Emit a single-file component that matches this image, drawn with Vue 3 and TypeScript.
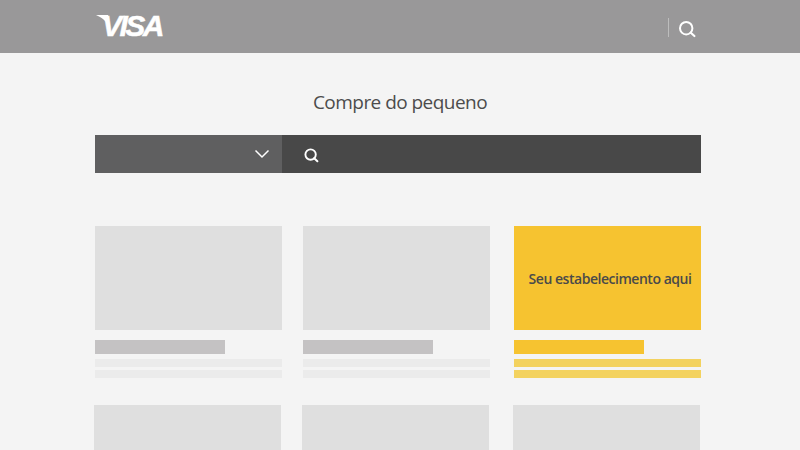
<script setup lang="ts">
interface Card { featured?: boolean; label?: string }
const firstRow: Card[] = [{}, {}, { featured: true, label: 'Seu estabelecimento aqui' }]
const secondRow: Card[] = [{}, {}, {}]
</script>

<template>
  <div class="page">
    <header class="topbar">
      <div class="logo">
        <svg class="flick" width="16" height="14" viewBox="0 0 16 14" aria-hidden="true">
          <path d="M0 0H9.5L12 0L14 13C12 8 7 3 0 0Z" fill="#fff" />
        </svg>
        <span class="logo-text">VISA</span>
      </div>
      <div class="top-actions">
        <span class="divider"></span>
        <svg width="18" height="18" viewBox="0 0 18 18" fill="none" stroke="#fff" aria-hidden="true">
          <circle cx="8.2" cy="8.2" r="6.2" stroke-width="2" />
          <path d="M12.8 12.8L16.4 16" stroke-width="2.2" stroke-linecap="round" />
        </svg>
      </div>
    </header>

    <h1 class="title">Compre do pequeno</h1>

    <div class="search">
      <div class="select">
        <svg width="16" height="10" viewBox="0 0 16 10" fill="none" stroke="#fff" stroke-width="1.5" aria-hidden="true">
          <path d="M1.5 1.5L8 8L14.5 1.5" />
        </svg>
      </div>
      <div class="field">
        <svg class="field-icon" width="15" height="15" viewBox="0 0 15 15" fill="none" stroke="#fff" aria-hidden="true">
          <circle cx="6.6" cy="6.6" r="5.2" stroke-width="1.9" />
          <path d="M10.2 10.2L13.4 13.2" stroke-width="2" stroke-linecap="round" />
        </svg>
      </div>
    </div>

    <section class="row row-first">
      <article v-for="(card, i) in firstRow" :key="i" class="card" :class="{ featured: card.featured }">
        <div class="thumb"><span v-if="card.label">{{ card.label }}</span></div>
        <div class="heading"></div>
        <div class="line"></div>
        <div class="line line-second"></div>
      </article>
    </section>

    <section class="row row-second">
      <article v-for="(card, i) in secondRow" :key="i" class="card">
        <div class="thumb"></div>
      </article>
    </section>
  </div>
</template>

<style>
html, body { margin: 0; background: #f4f4f4; }
</style>

<style scoped>
.page {
  width: 800px;
  height: 450px;
  overflow: hidden;
  background: #f4f4f4;
  font-family: "Open Sans", "Liberation Sans", sans-serif;
}
.topbar {
  height: 53px;
  background: #999899;
  display: flex;
  align-items: center;
  justify-content: space-between;
  padding: 0 104px 0 95px;
}
.logo {
  display: flex;
  align-items: center;
  height: 53px;
  position: relative;
}
.flick { position: absolute; left: 1px; top: 15px; }
.logo-text {
  margin-left: 7px;
  margin-bottom: 1px;
  font: italic 700 30px/1 "Liberation Sans", sans-serif;
  letter-spacing: -2.5px;
  -webkit-text-stroke: 0.5px #fff;
  color: #fff;
}
.top-actions { display: flex; align-items: center; gap: 9px; margin-top: 4px; }
.divider { width: 1px; height: 19px; background: #bdbdbd; margin-top: -3px; }
.title {
  margin: 37px 0 0;
  height: 45px;
  text-align: center;
  font-size: 19px;
  line-height: 24px;
  font-weight: 400;
  letter-spacing: -0.54px;
  color: #4c4c4c;
}
.search {
  display: flex;
  height: 38px;
  margin: 0 99px 0 95px;
}
.select {
  width: 187px;
  box-sizing: border-box;
  background: #5f5f60;
  display: flex;
  align-items: center;
  justify-content: flex-end;
  padding-right: 12px;
}
.field {
  flex: 1;
  background: #484848;
  display: flex;
  align-items: center;
  padding-left: 22px;
}
.field-icon { margin-top: 2px; }
.row { display: flex; }
.row-first { margin: 53px 0 0 95px; }
.row-second { margin: 27px 0 0 94px; }
.card { width: 187px; margin-right: 21px; }
.card:last-child { margin-right: 0; margin-left: 3px; }
.thumb {
  height: 104px;
  background: #dfdfdf;
  display: flex;
  align-items: center;
  justify-content: center;
}
.heading { width: 130px; height: 14px; margin-top: 10px; background: #c4c2c3; }
.line { height: 8px; margin-top: 5px; background: #ebebeb; }
.line-second { margin-top: 3px; }
.featured .thumb,
.featured .heading { background: #f6c330; }
.featured .line { background: #f3d25f; }
.thumb span {
  font-size: 14px;
  font-weight: 600;
  letter-spacing: -0.47px;
  color: #4a4a4a;
  white-space: nowrap;
  margin-left: 5px;
}
</style>
